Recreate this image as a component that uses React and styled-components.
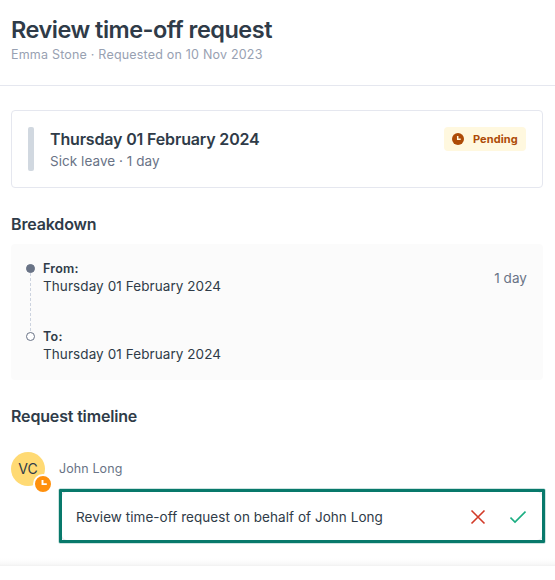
import React from "react";
import styled, { createGlobalStyle } from "styled-components";

const Global = createGlobalStyle`
  * { box-sizing: border-box; }
  body { margin: 0; background: #fff; font-family: Inter, sans-serif; color: #2f3b48; overflow: hidden; }
  h1, h2, h3, p { margin: 0; }
`;

const Page = styled.main`
  width: 555px;
  height: 580px;
  background: #fff;
`;

const Header = styled.header`
  height: 86px;
  padding: 14px 11px 0;
  border-bottom: 1px solid #e5e7ef;
`;

const Title = styled.h1`
  font-size: 23.5px;
  line-height: 32px;
  font-weight: 600;
  letter-spacing: -0.5px;
  white-space: nowrap;
`;

const Subtitle = styled.p`
  margin-top: 1px;
  font-size: 12.5px;
  line-height: 16px;
  color: #98a1b2;
  letter-spacing: 0.2px;
`;

const Content = styled.div`
  height: 480px;
  padding: 24px 12px 0 11px;
  background: linear-gradient(to top, #f1f1f1 0, #f8f8f8 2px, #fdfdfd 5px, #fff 8px);
`;

const Summary = styled.section`
  display: flex;
  align-items: flex-start;
  height: 78px;
  padding: 16px;
  border: 1px solid #e5e7ef;
  border-radius: 4px;
  background: #fff;
`;

const Accent = styled.span`
  width: 6px;
  height: 44px;
  margin-right: 16px;
  border-radius: 2px;
  background: #d1d8e0;
`;

const SummaryText = styled.div`
  flex: 1;
`;

const SummaryDate = styled.h3`
  font-size: 16px;
  line-height: 24px;
  font-weight: 600;
  letter-spacing: -0.16px;
`;

const Detail = styled.p`
  font-size: 13.5px;
  line-height: 20px;
  letter-spacing: 0.05px;
  color: #697386;
`;

const Badge = styled.span`
  display: flex;
  align-items: center;
  gap: 9px;
  width: 82px;
  height: 24px;
  padding-left: 8px;
  border-radius: 4px;
  background: #fff8df;
  color: #ad4b07;
  font-size: 11px;
  font-weight: 700;
  letter-spacing: 0.08px;
`;

const SectionTitle = styled.h2`
  margin-top: 24px;
  font-size: 16px;
  line-height: 24px;
  font-weight: 600;
  letter-spacing: -0.16px;
`;

const Breakdown = styled.section`
  display: flex;
  justify-content: space-between;
  height: 136px;
  margin-top: 8px;
  padding: 16px;
  border-radius: 4px;
  background: #fbfbfb;
`;

const Range = styled.div`
  display: flex;
  gap: 8px;
`;

const Track = styled.div`
  display: flex;
  flex-direction: column;
  align-items: center;
  width: 9px;
  height: 77px;
  margin: 4px 0 0 -1px;
`;

const Dot = styled.span`
  width: 9px;
  height: 9px;
  flex: none;
  border: 1px solid #697386;
  border-radius: 50%;
  background: ${(p) => (p.$filled ? "#697386" : "#fff")};
`;

const Dates = styled.div`
  display: flex;
  flex-direction: column;
  gap: 32px;
`;

const Label = styled.p`
  padding-top: 1px;
  font-size: 12.5px;
  line-height: 15px;
  font-weight: 600;
  letter-spacing: 0.25px;
`;

const DateText = styled.p`
  font-size: 13.5px;
  line-height: 20px;
  letter-spacing: 0.08px;
`;

const Duration = styled(Detail)`
  margin-top: 8px;
`;

const Entry = styled.div`
  display: flex;
  gap: 14px;
  margin-top: 24px;
`;

const Avatar = styled.div`
  position: relative;
  display: flex;
  align-items: center;
  justify-content: center;
  flex: none;
  width: 34px;
  height: 34px;
  padding-bottom: 2px;
  border-radius: 50%;
  background: #ffda74;
  font-size: 14px;
`;

const AvatarStatus = styled.span`
  position: absolute;
  left: 22px;
  top: 22px;
  display: flex;
  width: 20px;
  height: 20px;
`;

const EntryBody = styled.div`
  width: 486px;
  flex: none;
`;

const Person = styled.p`
  font-size: 12.5px;
  line-height: 16px;
  margin: 9px 0 12px;
  letter-spacing: 0.1px;
  color: #697386;
`;

const TaskFrame = styled.div`
  height: 54px;
  border: 3px solid #08796b;
  border-radius: 1px;
  box-shadow: 0 0 0 0.5px #08796b66;
  overflow: hidden;
`;

const Task = styled.div`
  display: flex;
  align-items: center;
  height: 100%;
  padding: 1px 16px 0 14px;
  border-radius: 5px;
  box-shadow: 0 0 0 1px #e7eaee;
  background: #fff;
`;

const TaskText = styled.span`
  flex: 1;
  font-size: 13.5px;
  letter-spacing: 0.05px;
`;

const IconButton = styled.button`
  display: flex;
  padding: 0;
  margin-left: ${(p) => p.$gap || 0}px;
  border: 0;
  background: none;
`;

const ClockIcon = () => (
  <svg width="12" height="12" viewBox="0 0 12 12">
    <circle cx="6" cy="6" r="6" fill="#ad4b07" />
    <path d="M5.7 3v3.2h3" fill="none" stroke="#fff8df" strokeWidth="1.5" />
  </svg>
);

const StatusIcon = () => (
  <svg width="20" height="20" viewBox="0 0 20 20">
    <circle cx="10" cy="10" r="9" fill="#ff900d" stroke="#fff" strokeWidth="2" />
    <path d="M9.5 6v4.1h4.3" fill="none" stroke="#fff" strokeWidth="1.9" />
  </svg>
);

const RangeLine = () => (
  <svg width="1" height="59" viewBox="0 0 1 59">
    <path d="M.5 0v59" stroke="#ccd3df" strokeDasharray="3 2" />
  </svg>
);

export default function App() {
  return (
    <Page>
      <Global />
      <Header>
        <Title>Review time-off request</Title>
        <Subtitle>Emma Stone · Requested on 10 Nov 2023</Subtitle>
      </Header>
      <Content>
        <Summary>
          <Accent />
          <SummaryText>
            <SummaryDate>Thursday 01 February 2024</SummaryDate>
            <Detail>Sick leave · 1 day</Detail>
          </SummaryText>
          <Badge><ClockIcon />Pending</Badge>
        </Summary>
        <SectionTitle>Breakdown</SectionTitle>
        <Breakdown>
          <Range>
            <Track>
              <Dot $filled />
              <RangeLine />
              <Dot />
            </Track>
            <Dates>
              <div>
                <Label>From:</Label>
                <DateText>Thursday 01 February 2024</DateText>
              </div>
              <div>
                <Label>To:</Label>
                <DateText>Thursday 01 February 2024</DateText>
              </div>
            </Dates>
          </Range>
          <Duration>1 day</Duration>
        </Breakdown>
        <SectionTitle>Request timeline</SectionTitle>
        <Entry>
          <Avatar>
            VC
            <AvatarStatus><StatusIcon /></AvatarStatus>
          </Avatar>
          <EntryBody>
            <Person>John Long</Person>
            <TaskFrame>
              <Task>
                <TaskText>Review time-off request on behalf of John Long</TaskText>
                <IconButton aria-label="Decline">
                  <svg width="16" height="16" viewBox="0 0 16 16">
                    <path d="m1.5 1.5 13 13m0-13-13 13" fill="none" stroke="#d23a28" strokeWidth="1.6" />
                  </svg>
                </IconButton>
                <IconButton aria-label="Approve" $gap={24}>
                  <svg width="16" height="16" viewBox="0 0 16 16">
                    <path d="m.5 8.5 4.5 4.5L15.5 2.5" fill="none" stroke="#1bae82" strokeWidth="1.6" />
                  </svg>
                </IconButton>
              </Task>
            </TaskFrame>
          </EntryBody>
        </Entry>
      </Content>
    </Page>
  );
}
